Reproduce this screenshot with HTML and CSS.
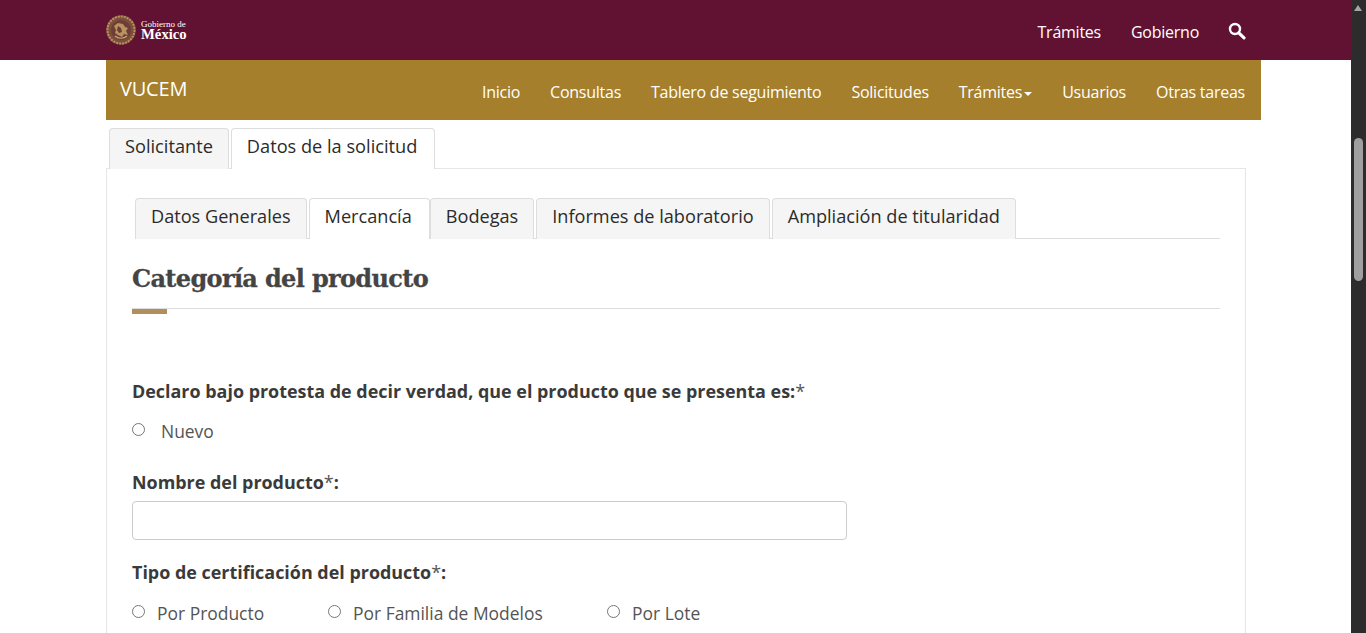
FILE: index.html
```html
<!DOCTYPE html>
<html lang="es">
<head>
    <title>VUCEM</title>
    <meta charset="utf-8">
    <link rel="stylesheet" href="styles.css">
</head>
<body>
<div class="window">
    <div class="page">
        <header class="gob-bar">
            <div class="container gob-inner">
                <a class="gob-logo" href="#">
                    <svg class="seal" width="30" height="30" viewBox="0 0 30 30">
                        <circle cx="15" cy="15" r="14.8" fill="#7c4f3c"/>
                        <circle cx="15" cy="15" r="13.5" fill="none" stroke="#b8935f" stroke-width="2" stroke-dasharray="2 1"/>
                        <circle cx="15" cy="15" r="10" fill="#6f3d38"/>
                        <path d="M8 11l4-3 5 1 2 3 3 1-2 3 2 4-4-1-2 3-4-2-3-2 1-3z" fill="#b8935f"/>
                        <path d="M12 11l3 2 1 4-3 1-2-3z" fill="#6f3d38"/>
                        <path d="M9 21c3 3 9 3 12 0" fill="none" stroke="#c9a878" stroke-width="1.2"/>
                    </svg>
                    <span class="gob-word"><small>Gobierno de</small><b>México</b></span>
                </a>
                <nav class="gob-links">
                    <a href="#">Trámites</a>
                    <a href="#">Gobierno</a>
                    <svg class="search" width="18" height="18" viewBox="0 0 18 18">
                        <circle cx="7" cy="7" r="5" fill="none" stroke="#fff" stroke-width="2.4"/>
                        <path d="M10.8 10.8l5.2 5" stroke="#fff" stroke-width="3.2" stroke-linecap="round"/>
                    </svg>
                </nav>
            </div>
        </header>

        <div class="container sub-wrap">
            <div class="sub-bar">
                <a class="brand" href="#">VUCEM</a>
                <nav class="sub-links">
                    <a href="#">Inicio</a>
                    <a href="#">Consultas</a>
                    <a href="#">Tablero de seguimiento</a>
                    <a href="#">Solicitudes</a>
                    <a href="#">Trámites<span class="caret"></span></a>
                    <a href="#">Usuarios</a>
                    <a href="#">Otras tareas</a>
                </nav>
            </div>

            <ul class="tabs main-tabs">
                <li>Solicitante</li>
                <li class="active">Datos de la solicitud</li>
            </ul>

            <section class="panel">
                <ul class="tabs inner-tabs">
                    <li>Datos Generales</li>
                    <li class="active">Mercancía</li>
                    <li>Bodegas</li>
                    <li>Informes de laboratorio</li>
                    <li>Ampliación de titularidad</li>
                </ul>

                <h2 class="section-title">Categoría del producto</h2>
                <div class="section-rule"><span></span></div>

                <form class="form">
                    <p class="label first">Declaro bajo protesta de decir verdad, que el producto que se presenta es:<i>*</i></p>
                    <label class="radio nuevo"><input type="radio" name="estado"><span>Nuevo</span></label>

                    <p class="label nombre">Nombre del producto<i>*</i>:</p>
                    <input class="text-input" type="text">

                    <p class="label tipo">Tipo de certificación del producto<i>*</i>:</p>
                    <div class="radio-row">
                        <label class="radio r1"><input type="radio" name="tipo"><span>Por Producto</span></label>
                        <label class="radio r2"><input type="radio" name="tipo"><span>Por Familia de Modelos</span></label>
                        <label class="radio"><input type="radio" name="tipo"><span>Por Lote</span></label>
                    </div>
                </form>
            </section>
        </div>
    </div>

    <div class="scrollbar">
        <span class="arrow"></span>
        <span class="thumb"></span>
    </div>
</div>
</body>
</html>
```

FILE: styles.css
```css
* {
    box-sizing: border-box;
}
html, body {
    margin: 0;
    height: 100%;
    overflow: hidden;
}
body {
    background-color: #ffffff;
    color: #333333;
    font-family: "Open Sans", sans-serif;
    font-size: 18px;
}
a {
    color: inherit;
    text-decoration: none;
}
.window {
    display: flex;
    height: 633px;
}
.page {
    flex: 1;
    min-width: 0;
    overflow: hidden;
}
.container {
    width: 1155px;
    margin-left: 106px;
}

/* top bar */
.gob-bar {
    background-color: #611232;
    height: 60px;
    color: #ffffff;
}
.gob-inner {
    display: flex;
    justify-content: space-between;
    align-items: center;
    height: 60px;
    padding-right: 15px;
}
.gob-logo {
    display: flex;
    align-items: center;
    gap: 5px;
}
.gob-word {
    display: flex;
    flex-direction: column;
    font-family: "Liberation Serif", serif;
}
.gob-word small {
    font-size: 9px;
    line-height: 8px;
}
.gob-word b {
    font-size: 14.7px;
    font-weight: 700;
    line-height: 12px;
}
.gob-links {
    display: flex;
    align-items: center;
    gap: 30px;
    font-size: 16px;
    letter-spacing: -0.25px;
    padding-top: 4px;
}
.gob-links a:nth-child(2) {
    margin-right: -1px;
}
.search {
    margin-top: -2px;
}

/* gold bar */
.sub-bar {
    background-color: #a57f2c;
    height: 60px;
    color: #ffffff;
    display: flex;
    justify-content: space-between;
    padding: 0 16px 0 14px;
}
.brand {
    font-size: 20px;
    line-height: 58px;
    letter-spacing: -0.2px;
}
.sub-links {
    display: flex;
    gap: 30px;
    font-size: 16px;
    line-height: 64px;
    letter-spacing: -0.25px;
}
.caret {
    display: inline-block;
    margin-left: 2px;
    vertical-align: middle;
    border-top: 4px solid #ffffff;
    border-left: 4px solid transparent;
    border-right: 4px solid transparent;
}

/* tabs */
.tabs {
    display: flex;
    list-style: none;
    margin: 0;
    padding: 0;
    gap: 2px;
}
.tabs li {
    background-color: #f5f5f5;
    border: 1px solid #dddddd;
    border-bottom: none;
    border-radius: 4px 4px 0 0;
    color: #2b2b2b;
    font-size: 18.2px;
    height: 41px;
    padding: 0 15px;
    line-height: 35px;
    position: relative;
}
.tabs li.active {
    background-color: #ffffff;
}
.main-tabs {
    margin-top: 8px;
    padding-left: 3px;
    height: 40px;
}
.main-tabs li.active {
    z-index: 1;
    padding-right: 17px;
}
.inner-tabs li {
    font-size: 18.15px;
}
.inner-tabs li.active {
    padding-right: 17px;
    margin-right: -2px;
    z-index: 1;
}
.panel {
    width: 1140px;
    height: 470px;
    border: 1px solid #e6e6e6;
    border-bottom: none;
    padding: 29px 25px 0 25px;
}
.inner-tabs {
    margin-left: 3px;
    height: 41px;
    border-bottom: 1px solid #dddddd;
}

/* heading */
.section-title {
    margin: 20px 0 0;
    font-family: "DejaVu Serif", serif;
    font-size: 24px;
    font-weight: 700;
    letter-spacing: -0.65px;
    line-height: 40px;
    color: #444444;
    -webkit-text-stroke: 0.3px #444444;
}
.section-rule {
    margin-top: 9px;
    border-top: 1px solid #dddddd;
    height: 6px;
}
.section-rule span {
    display: block;
    width: 35px;
    height: 5px;
    background-color: #b38e5d;
}

/* form */
.label {
    margin: 0;
    font-weight: 700;
    font-size: 17.93px;
    line-height: 24px;
    color: #3a3a3a;
}
.label i {
    font-style: normal;
    font-weight: 400;
    color: #555555;
}
.first {
    margin-top: 65px;
}
.radio {
    display: inline-flex;
    align-items: center;
    color: #545454;
    font-size: 17.45px;
    line-height: 24px;
}
.radio input {
    width: 13px;
    height: 13px;
    margin: 0 16px 4px 0;
    flex: none;
}
.nuevo {
    margin-top: 16px;
}
.nombre {
    margin-top: 27px;
}
.text-input {
    display: block;
    width: 715px;
    height: 39px;
    margin-top: 7px;
    border: 1px solid #cccccc;
    border-radius: 4px;
    background-color: #ffffff;
}
.tipo {
    margin-top: 20px;
}
.radio-row {
    display: flex;
    margin-top: 17px;
}
.radio-row input {
    margin-right: 12px;
}
.r1 {
    width: 196px;
}
.r2 {
    width: 279px;
}

/* fake browser scrollbar */
.scrollbar {
    width: 15px;
    flex: none;
    background-color: #2c2c2c;
    position: relative;
}
.arrow {
    position: absolute;
    top: 5px;
    left: 3px;
    border-bottom: 6px solid #a6a6a6;
    border-left: 4.5px solid transparent;
    border-right: 4.5px solid transparent;
}
.thumb {
    position: absolute;
    top: 138px;
    left: 3px;
    width: 9px;
    height: 143px;
    border-radius: 5px;
    background-color: #9f9f9f;
}
```
